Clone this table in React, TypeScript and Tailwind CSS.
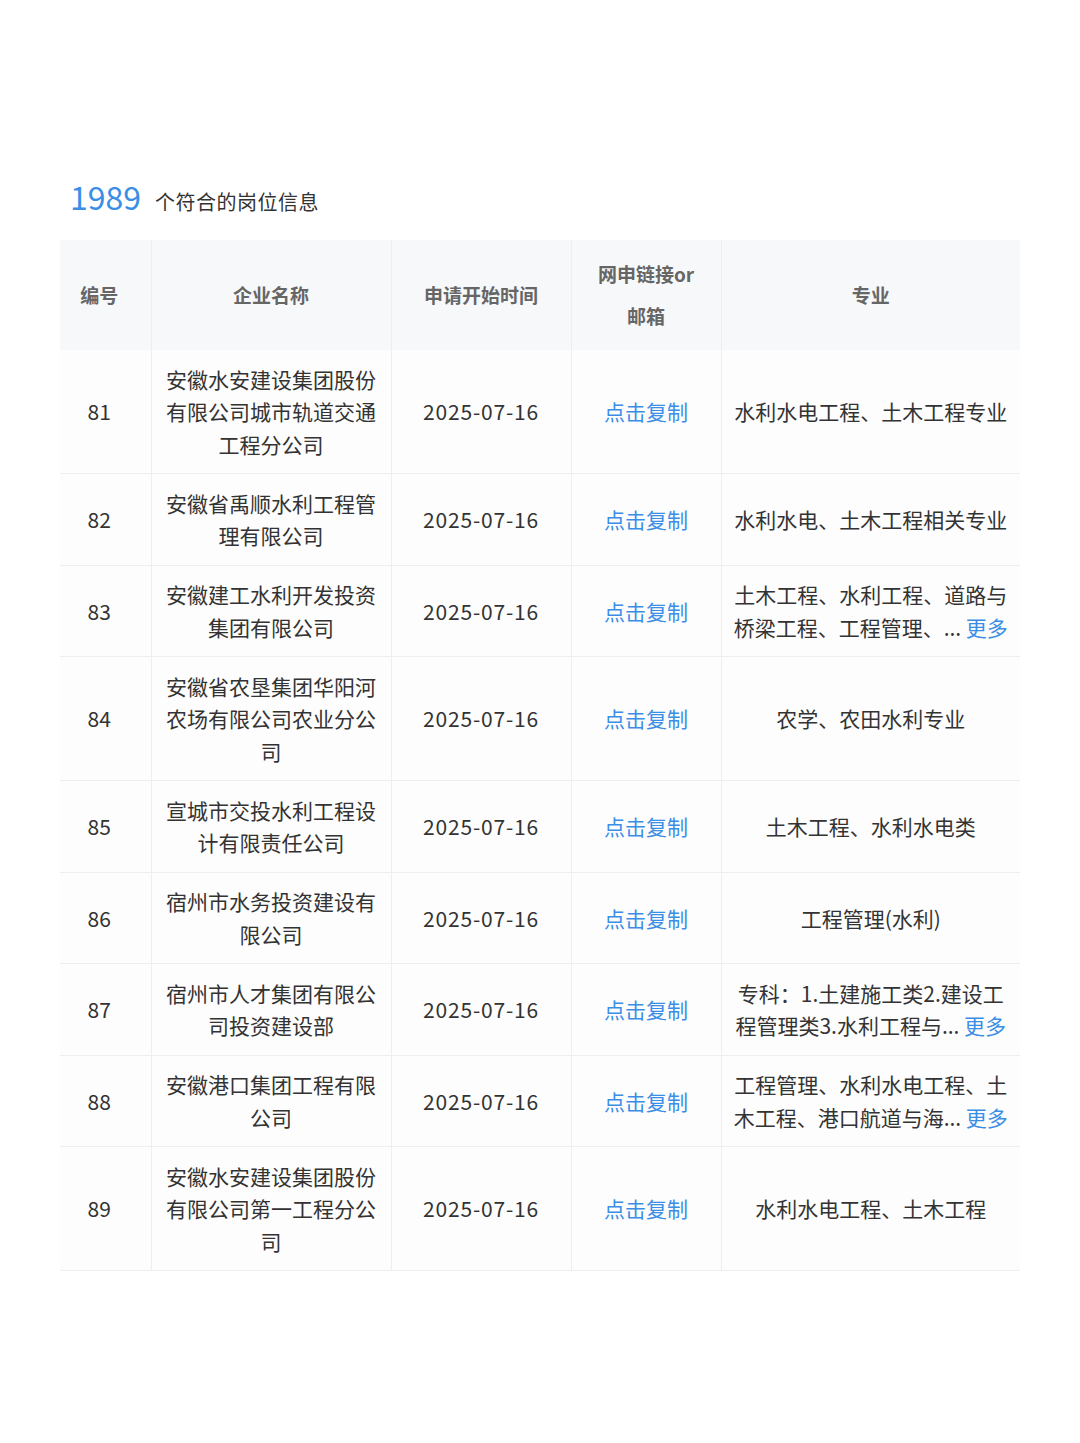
import React from 'react';

type Row = {
  id: number;
  company: string;
  major: React.ReactNode;
};

const more = <span className="text-[#3a8ee6]">更多</span>;

const rows: Row[] = [
  { id: 81, company: '安徽水安建设集团股份有限公司城市轨道交通工程分公司', major: '水利水电工程、土木工程专业' },
  { id: 82, company: '安徽省禹顺水利工程管理有限公司', major: '水利水电、土木工程相关专业' },
  {
    id: 83,
    company: '安徽建工水利开发投资集团有限公司',
    major: (
      <>
        <span className="block whitespace-nowrap">土木工程、水利工程、道路与</span>
        <span className="block whitespace-nowrap">桥梁工程、工程管理、... {more}</span>
      </>
    ),
  },
  { id: 84, company: '安徽省农垦集团华阳河农场有限公司农业分公司', major: '农学、农田水利专业' },
  { id: 85, company: '宣城市交投水利工程设计有限责任公司', major: '土木工程、水利水电类' },
  { id: 86, company: '宿州市水务投资建设有限公司', major: '工程管理(水利)' },
  {
    id: 87,
    company: '宿州市人才集团有限公司投资建设部',
    major: (
      <>
        <span className="block whitespace-nowrap">专科：1.土建施工类2.建设工</span>
        <span className="block whitespace-nowrap">程管理类3.水利工程与... {more}</span>
      </>
    ),
  },
  {
    id: 88,
    company: '安徽港口集团工程有限公司',
    major: (
      <>
        <span className="block whitespace-nowrap">工程管理、水利水电工程、土</span>
        <span className="block whitespace-nowrap">木工程、港口航道与海... {more}</span>
      </>
    ),
  },
  { id: 89, company: '安徽水安建设集团股份有限公司第一工程分公司', major: '水利水电工程、土木工程' },
];

export default function App() {
  return (
    <div
      className="min-h-[1443px] w-[1080px] bg-white text-[#333]"
      style={{ fontFamily: '"Noto Sans CJK SC", "Noto Sans", sans-serif' }}
    >
      <div className="pt-[176px] px-[60px]">
        <div className="flex items-baseline pl-[10px] h-[64px]">
          <span className="text-[32px] leading-[40px] text-[#3a8ee6]">1989</span>
          <span className="ml-[14px] text-[20px] tracking-[0.5px] text-[#333]">个符合的岗位信息</span>
        </div>

        <table className="w-[960px] table-fixed border-collapse text-center">
          <colgroup>
            <col className="w-[91px]" />
            <col className="w-[240px]" />
            <col className="w-[180px]" />
            <col className="w-[150px]" />
            <col className="w-[299px]" />
          </colgroup>
          <thead>
            <tr className="bg-[#f7f8fa] text-[19px] font-bold text-[#666] leading-[42px]">
              <th className="h-[110px] border-r border-[#eceef2] pr-[12px] py-[13px] font-bold">编号</th>
              <th className="border-r border-[#eceef2] py-[13px] font-bold">企业名称</th>
              <th className="border-r border-[#eceef2] py-[13px] font-bold">申请开始时间</th>
              <th className="border-r border-[#eceef2] px-[18px] py-[13px] font-bold">网申链接or邮箱</th>
              <th className="py-[13px] font-bold">专业</th>
            </tr>
          </thead>
          <tbody className="text-[21px] leading-[32.5px]">
            {rows.map((row) => (
              <tr key={row.id} className="border-b border-[#eceef2] bg-[#fdfdfd]">
                <td className="border-r border-[#eceef2] pr-[12px] py-[12.75px]">{row.id}</td>
                <td className="border-r border-[#eceef2] px-[14px] py-[12.75px]">{row.company}</td>
                <td className="border-r border-[#eceef2] py-[12.75px] tracking-[0.8px]">2025-07-16</td>
                <td className="border-r border-[#eceef2] py-[12.75px] text-[#3a8ee6]">点击复制</td>
                <td className="px-[12px] py-[12.75px]">{row.major}</td>
              </tr>
            ))}
          </tbody>
        </table>
      </div>
    </div>
  );
}
